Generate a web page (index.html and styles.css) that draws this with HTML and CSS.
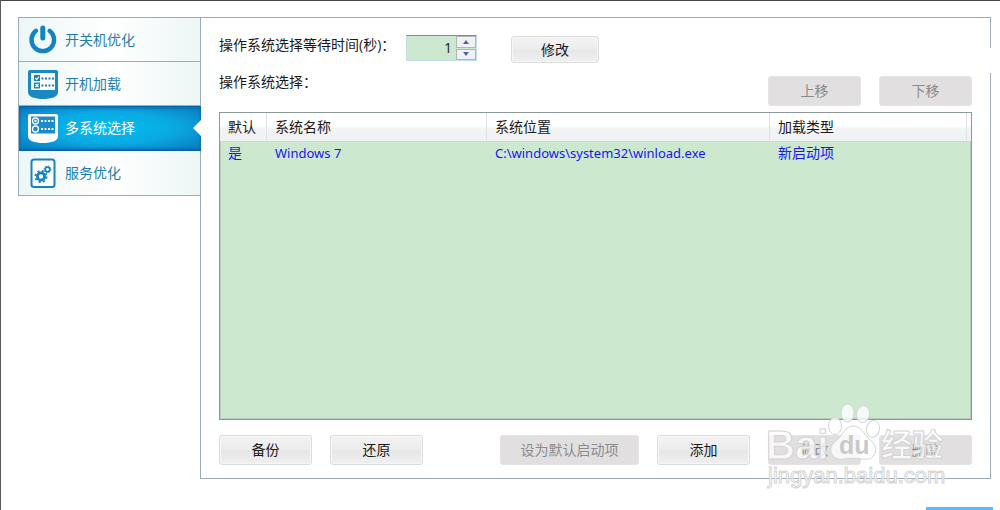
FILE: index.html
```html
<!DOCTYPE html>
<html lang="zh-CN">
<head>
<meta charset="utf-8">
<title>多系统选择</title>
<link rel="stylesheet" href="styles.css">
</head>
<body>
<div class="window">
  <nav class="tabs">
    <a class="tab" href="#power">
      <svg class="tab-icon" viewBox="0 0 32 32" fill="none" stroke="#1583c1" stroke-width="4.4" stroke-linecap="round"><path d="M9 6.800a11.300 11.300 0 1 0 13.600 0"/><path stroke-width="5" d="M15.800 4v10"/></svg>
      <span>开关机优化</span>
    </a>
    <a class="tab" href="#startup">
      <svg class="tab-icon" viewBox="0 0 32 32"><path fill="#1a88c4" d="M3 2h26q2 0 2 2v20c0 5-7 7-15 7S1 29 1 24V4q0-2 2-2z"/><path fill="#fff" d="M4 5h24v17H4z"/><path fill="#1a7fb8" d="M7 7h6v6H7zM7 14.500h6v6H7z"/><path fill="none" stroke="#fff" stroke-width="1.200" d="M8.200 10l1.500 1.500L12 8.500M8.500 16l3 3M11.500 16l-3 3"/><path fill="none" stroke="#1a7fb8" stroke-width="2" stroke-dasharray="2 1.500" d="M14.500 10.500H28M14.500 17.500H28"/></svg>
      <span>开机加载</span>
    </a>
    <a class="tab tab-active" href="#multi" aria-current="page">
      <svg class="tab-icon" viewBox="0 0 32 32"><path fill="#fff" d="M3 2h26q2 0 2 2v20c0 5-7 7-15 7S1 29 1 24V4q0-2 2-2z"/><path fill="#178dcc" d="M4 4.500h24v17H4z"/><circle cx="8.500" cy="9" r="3" fill="none" stroke="#fff" stroke-width="1.300"/><circle cx="8.500" cy="9" r="1.200" fill="#fff"/><circle cx="8.500" cy="17" r="3" fill="none" stroke="#fff" stroke-width="1.300"/><path fill="none" stroke="#fff" stroke-width="2" stroke-dasharray="2 1.500" d="M14 9H28M14 17H28"/></svg>
      <span>多系统选择</span>
    </a>
    <a class="tab" href="#services">
      <svg class="tab-icon" viewBox="0 0 32 32" fill="none" stroke="#1583c1"><rect x="4.500" y="2.500" width="23" height="27.500" rx="2.500" fill="#fff" stroke-width="2"/><circle cx="14" cy="19.500" r="3.600" stroke-width="2.800"/><circle cx="14" cy="19.500" r="5.600" stroke-width="1.800" stroke-dasharray="2.200 2.200"/><circle cx="20.500" cy="12.500" r="2.300" stroke-width="1.700"/><circle cx="20.500" cy="12.500" r="3.400" stroke-width="1" stroke-dasharray="1.400 1.270"/></svg>
      <span>服务优化</span>
    </a>
  </nav>
  <main class="panel">
    <div class="wait-row">
      <label for="wait">操作系统选择等待时间(秒)：</label>
      <div class="spinner">
        <input id="wait" class="spinner-input" type="text" inputmode="numeric" value="1">
        <div class="spinner-buttons">
          <button class="spin" type="button" aria-label="增加"><svg class="arrow" viewBox="0 0 6 4"><path d="M0 4L3 0l3 4z"/></svg></button>
          <button class="spin" type="button" aria-label="减少"><svg class="arrow" viewBox="0 0 6 4"><path d="M0 0l3 4 3-4z"/></svg></button>
        </div>
      </div>
      <button class="button button-short" type="button">修改</button>
    </div>
    <div class="list-bar">
      <span>操作系统选择：</span>
      <div class="order">
        <button class="button" type="button" disabled>上移</button>
        <button class="button" type="button" disabled>下移</button>
      </div>
    </div>
    <div class="list">
      <table class="systems">
        <colgroup><col class="col-default"><col class="col-name"><col class="col-path"><col class="col-type"><col class="col-end"></colgroup>
        <thead><tr><th>默认</th><th>系统名称</th><th>系统位置</th><th>加载类型</th><th></th></tr></thead>
        <tbody><tr><td>是</td><td class="latin">Windows 7</td><td class="latin">C:\windows\system32\winload.exe</td><td>新启动项</td><td></td></tr></tbody>
      </table>
    </div>
    <div class="actions">
      <button class="button" type="button">备份</button>
      <button class="button" type="button">还原</button>
      <button class="button button-wide" type="button" disabled>设为默认启动项</button>
      <button class="button" type="button">添加</button>
      <button class="button" type="button" disabled>修改</button>
      <button class="button" type="button" disabled>删除</button>
    </div>
  </main>
  <svg class="watermark" viewBox="0 0 184 92" aria-hidden="true">
    <g class="mark">
      <ellipse cx="69" cy="24" rx="6.500" ry="8.500"/>
      <ellipse cx="81.500" cy="11" rx="6.500" ry="9"/>
      <ellipse cx="97" cy="12" rx="6.500" ry="8.500" transform="rotate(10 97 12)"/>
      <ellipse cx="107" cy="27" rx="6.500" ry="8.500" transform="rotate(10 107 27)"/>
      <path d="M87 24c8 0 11 8 17 14 5 4 7 8 5 13-2 6-8 7-13 6-6-1-12-1-18 0-6 1-11-1-13-7-1-5 1-8 6-12 6-5 8-14 16-14z"/>
      <text class="mark-big" x="0" y="57">Bai</text>
      <text class="mark-cjk" x="115" y="54">经验</text>
      <text class="mark-url" x="2" y="81">jingyan.baidu.com</text>
    </g>
    <text class="mark-du" x="73" y="52">du</text>
  </svg>
  <div class="corner"></div>
</div>
</body>
</html>
```
FILE: styles.css
```css
* { box-sizing: border-box; }
body {
  margin: 0;
  background: #fff;
  font: 14px/20px "Open Sans", "Noto Sans CJK SC", sans-serif;
  color: #1a1a1a;
}
button, input { font: inherit; color: inherit; }
.window {
  position: relative;
  display: flex;
  align-items: flex-start;
  min-height: 100vh;
  padding: 16px 9px 31px 17px;
  border-top: 1px solid #49434a;
  border-left: 1px solid #5a5a5e;
  overflow: hidden;
}
.tabs {
  flex: none;
  width: 182px;
  border: 1px solid #9dabb8;
  border-right: 0;
}
.tab {
  position: relative;
  display: flex;
  align-items: center;
  gap: 6px;
  height: 44px;
  padding-left: 8px;
  color: #1b7fae;
  text-decoration: none;
  background: linear-gradient(90deg, #ebf7f6, #fff 50%, #edf7f6);
  border-bottom: 1px solid #9dabb8;
}
.tab:last-child { border-bottom: 0; }
.tab-icon { width: 32px; height: 32px; }
.tab-active {
  z-index: 1;
  height: 45px;
  margin-right: -1px;
  color: #fff;
  background: radial-gradient(ellipse at 50% 50%, #02bdf2, #0aa9e2 50%, #0b77bb 100%);
  border-bottom-color: #0d5fa5;
  box-shadow: inset 0 2px 3px #0668ab, inset 0 -1px 3px #0668ab;
}
.tab-active::after {
  content: "";
  position: absolute;
  right: 0;
  top: 14px;
  border: 8px solid transparent;
  border-left: 0;
  border-right-color: #fff;
}
.panel {
  position: relative;
  flex: 1;
  min-width: 0;
  display: flex;
  flex-direction: column;
  min-height: calc(100vh - 48px);
  padding: 17px 18px 13px;
  border: 1px solid #9dabb8;
}
.panel::after {
  content: "";
  position: absolute;
  top: 30px;
  right: -1px;
  width: 1px;
  height: 25px;
  background: #fff;
}
.tabs { z-index: 1; }
.wait-row { display: flex; align-items: flex-start; height: 28px; }
.wait-row label { width: 187px; white-space: nowrap; }
.spinner {
  display: flex;
  width: 71px;
  height: 26px;
  margin-right: 34px;
  border: 1px solid #c1dcf0;
  border-top-color: #5794bf;
  background: #cce8cf;
}
.spinner-input {
  flex: 1;
  min-width: 0;
  border: 0;
  padding: 0 4px;
  background: #cce8cf;
  text-align: right;
}
.spinner-buttons { display: grid; gap: 1px; width: 20px; }
.spin {
  display: flex;
  align-items: center;
  justify-content: center;
  padding: 0;
  border: 1px solid #b4b4ba;
  background: #f1f1f3;
}
.arrow { width: 6px; height: 4px; fill: #4b63ae; }
.button {
  width: 93px;
  height: 30px;
  padding: 0;
  border: 1px solid #dcdcdc;
  border-radius: 3px;
  background: linear-gradient(#f3f3f3, #ececec 50%, #e6e6e6 51%, #f0f0f0);
  box-shadow: inset 0 0 0 1px #f7f7f7;
}
.button:disabled {
  color: #8b8b8b;
  border-color: #e6e3e3;
  background: #e1dfdf;
  box-shadow: none;
}
.button-short { width: 88px; height: 27px; align-self: flex-end; }
.button-wide { width: 139px; }
.list-bar {
  display: flex;
  justify-content: space-between;
  align-items: flex-end;
  height: 43px;
}
.list-bar > span { align-self: flex-start; padding-top: 9px; }
.order { display: flex; gap: 18px; }
.list {
  flex: 1;
  margin-top: 6px;
  background: #cce8cf;
  border: 1px solid #8c999a;
  box-shadow: inset 0 0 0 1px #b7ccbc;
}
.systems { width: 100%; table-layout: fixed; border-collapse: separate; border-spacing: 0; }
.col-default { width: 47px; }
.col-name { width: 220px; }
.col-path { width: 283px; }
.col-end { width: 4px; }
.systems th {
  height: 29px;
  padding: 0 8px;
  text-align: left;
  font-weight: normal;
  border-right: 1px solid #dfe2e4;
  border-bottom: 1px solid #d5d5d5;
  background: linear-gradient(#fff 45%, #f2f4f6 55%, #f0f1f3);
}
.systems th:last-child { padding: 0; border-right: 0; }
.systems td { height: 22px; padding: 0 8px; color: #1717f0; white-space: nowrap; }
.systems td:last-child { padding: 0; }
.systems .latin { font-family: "Noto Sans", sans-serif; font-size: 13px; }
.actions { display: flex; gap: 18px; margin-top: 15px; }
.actions .button-wide { margin-left: auto; }
.watermark {
  position: absolute;
  right: 50px;
  bottom: 16px;
  width: 184px;
  height: 92px;
  overflow: visible;
  pointer-events: none;
}
.mark { fill: rgba(255, 255, 255, .78); stroke: #d4d4d4; stroke-width: 1; }
.mark-big { font: bold 40px "Liberation Sans", sans-serif; }
.mark-cjk { font: bold 31px "Noto Sans CJK SC", sans-serif; }
.mark-url { font: 22px "Liberation Sans", sans-serif; }
.mark-du { font: bold 25px "Liberation Sans", sans-serif; fill: #c9c9c9; }
.corner {
  position: absolute;
  right: 7px;
  bottom: 0;
  width: 67px;
  height: 3px;
  background: #5fbcf3;
}
```
